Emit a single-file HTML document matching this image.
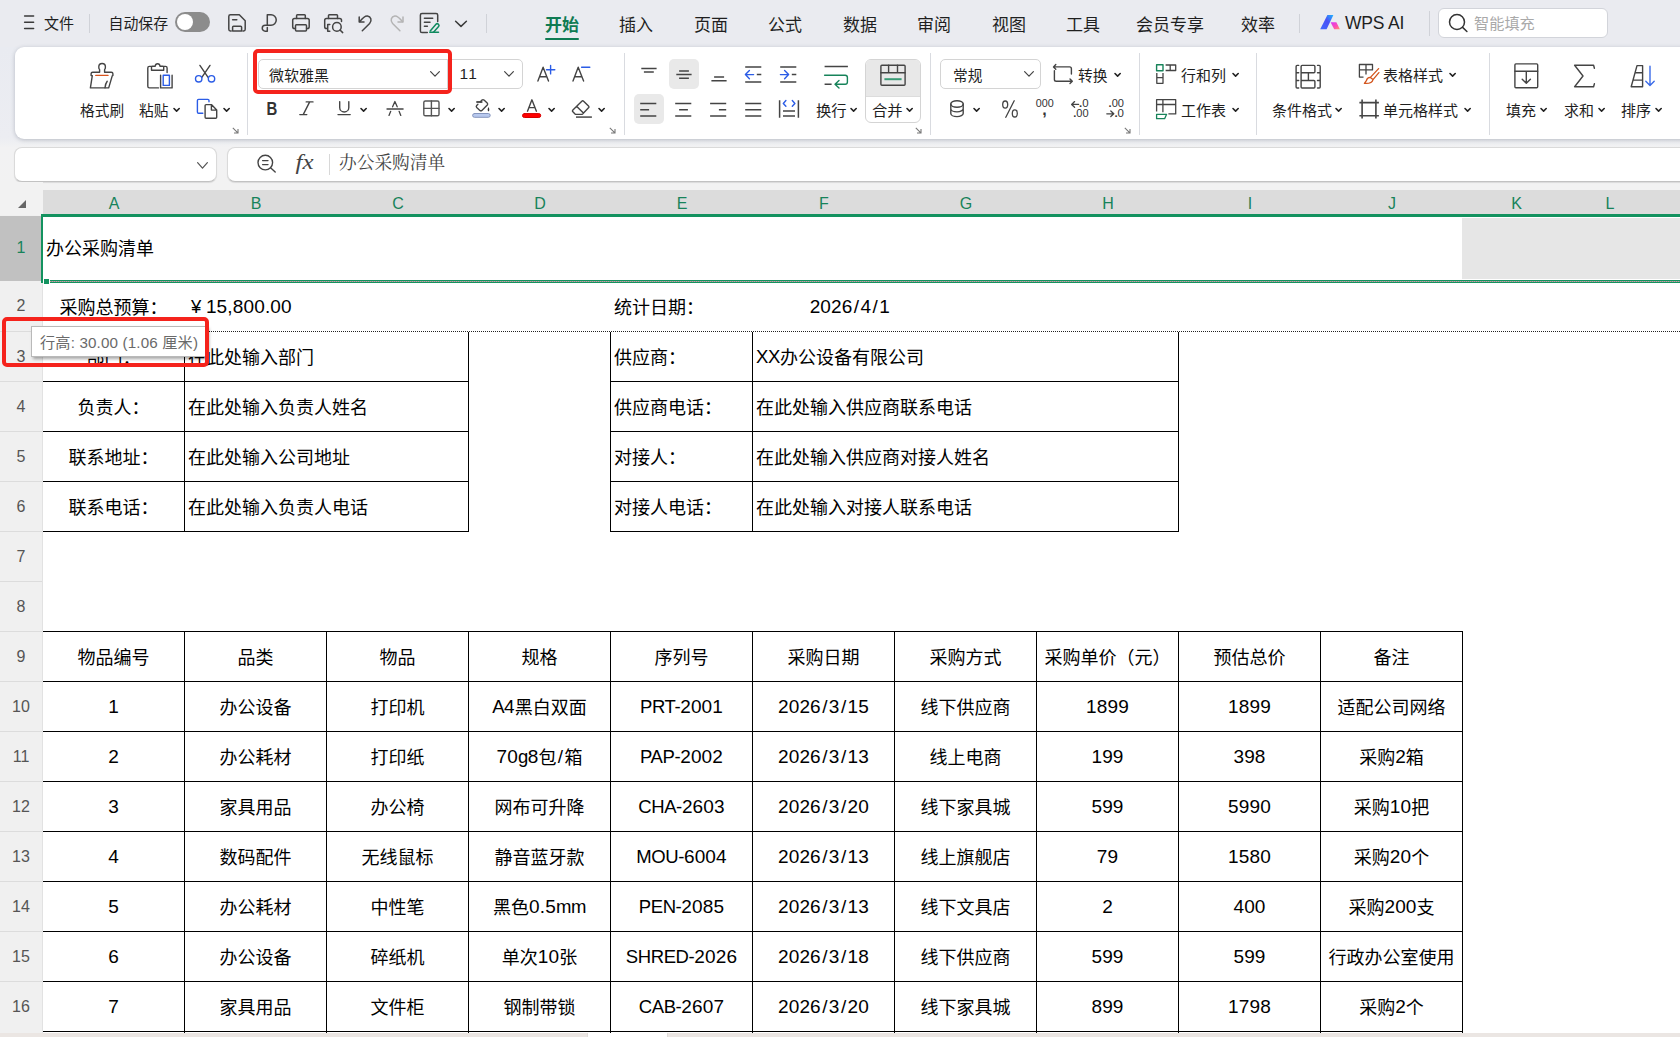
<!DOCTYPE html><html lang="zh-CN"><head><meta charset="utf-8"><title>办公采购清单</title><style>
*{box-sizing:border-box}
html,body{margin:0;padding:0}
body{width:1680px;height:1037px;overflow:hidden;position:relative;background:#fff;
 font-family:"Liberation Sans","Noto Sans CJK SC",sans-serif;color:#222}
.abs{position:absolute}
#top{position:absolute;left:0;top:0;width:1680px;height:47px;background:#eaebf0}
#mid{position:absolute;left:0;top:47px;width:1680px;height:143px;background:linear-gradient(#e9ebf1 0,#ecedf2 91px,#f2f2f3 101px,#f2f2f2 143px)}
#ribbon{position:absolute;left:15px;top:47px;width:1700px;height:92px;background:#fff;border-radius:9px;box-shadow:0 1px 4px rgba(60,70,90,.30)}
.t{position:absolute;white-space:nowrap;line-height:20px;height:20px;font-size:14.7px;color:#1f1f1f}
.tab{position:absolute;white-space:nowrap;top:14.5px;line-height:22px;font-size:17px;color:#1f1f1f}
.vs{position:absolute;width:1px;background:#d9dbe0}
.box{position:absolute;border:1px solid #d4d4d4;background:#fff}
.fb{box-shadow:0 1px 1px rgba(0,0,0,.10);border-bottom-color:#c2c2c2 !important}
svg{position:absolute;overflow:visible}
.chev{position:absolute;width:7px;height:5px}
/* sheet */
#sheet{position:absolute;left:0;top:190px;width:1680px;height:847px;background:#fff}
.colh{position:absolute;top:0;height:24px;line-height:27px;font-size:16px;color:#17835a;text-align:center}
.rowh{position:absolute;left:0;width:42px;text-align:center;font-size:16px;color:#555;border-top:1px solid #dcdcdc;}
.c{position:absolute;height:49px;line-height:49px;font-size:18px;color:#000;white-space:nowrap;overflow:hidden}
.c.ctr{text-align:center}
.c.l{text-align:left;padding-left:3px}
.c.r{text-align:right;padding-right:4px}
.c .d{font-size:19px;letter-spacing:.15px;position:relative;top:-1.5px}
.c .a{font-size:18.5px;letter-spacing:-.4px;position:relative;top:-1.5px}
.c .sl{margin:0 1.3px}
.hl{position:absolute;height:1px;background:#000}
.vl{position:absolute;width:1px;background:#000}
</style></head><body>
<div id="top"></div>
<div id="mid"></div>
<div id="ribbon"></div>
<div class="t" style="left:44px;top:14px;font-size:15px">文件</div>
<div class="vs" style="left:89px;top:14px;height:19px;background:#d0d2d8"></div>
<div class="t" style="left:108.5px;top:14px;font-size:14.9px">自动保存</div>
<div class="abs" style="left:175px;top:12px;width:35px;height:20px;border-radius:10px;background:#8c8c8c"><div class="abs" style="left:2px;top:2px;width:16px;height:16px;border-radius:8px;background:#fff"></div></div>
<div class="vs" style="left:486px;top:14px;height:19px;background:#d0d2d8"></div>
<div class="tab" style="left:545px;color:#0f7b53;font-weight:bold">开始</div>
<div class="abs" style="left:545px;top:38px;width:34px;height:2px;background:#0f7b53;border-radius:1px"></div>
<div class="tab" style="left:619px">插入</div>
<div class="tab" style="left:694px">页面</div>
<div class="tab" style="left:768px">公式</div>
<div class="tab" style="left:843px">数据</div>
<div class="tab" style="left:917px">审阅</div>
<div class="tab" style="left:992px">视图</div>
<div class="tab" style="left:1066px">工具</div>
<div class="tab" style="left:1136px">会员专享</div>
<div class="tab" style="left:1241px">效率</div>
<div class="vs" style="left:1299px;top:14px;height:19px;background:#d0d2d8"></div>
<div class="tab" style="left:1345px;top:12.3px;font-size:17.5px;letter-spacing:-.2px">WPS AI</div>
<div class="vs" style="left:1429px;top:11px;height:25px;background:#d0d2d8"></div>
<div class="box" style="left:1438px;top:8px;width:170px;height:30px;border-radius:6px;border-color:#d2d4da"></div>
<div class="t" style="left:1474px;top:14px;font-size:15.2px;color:#a9a9a9">智能填充</div>
<svg style="left:0;top:0;width:1680px;height:47px" viewBox="0 0 1680 47" fill="none" stroke="#444" stroke-width="1.5" stroke-linecap="round" stroke-linejoin="round">
<!-- hamburger -->
<path d="M24.6 16.1 H33.6 M24.6 22.3 H33.6 M24.6 28.6 H33.6" stroke="#3a3a3a"/>
<!-- save -->
<path d="M231.2 30.9 H230.4 Q228.8 30.9 228.8 29.3 V16.4 Q228.8 14.8 230.4 14.8 H239.3 L245.2 20.8 V29.3 Q245.2 30.9 243.6 30.9 H242.9"/>
<path d="M232.6 31 V27.2 Q232.6 26.3 233.5 26.3 H240.7 Q241.6 26.3 241.6 27.2 V31 Z"/>
<path d="M232.6 19.8 H236.8"/>
<!-- pdf P -->
<path d="M267.3 25.3 V14.8 H271 A5.25 5.25 0 0 1 271 25.3 H265.2 A2.95 2.95 0 0 0 265.2 31.2 H267.3 V27.4"/>
<!-- printer -->
<path d="M295.4 28.5 H294.5 Q292.7 28.5 292.7 26.7 V20.3 Q292.7 18.5 294.5 18.5 H307.4 Q309.2 18.5 309.2 20.3 V26.7 Q309.2 28.5 307.4 28.5 H306.6"/>
<path d="M296.6 18.5 V15.6 Q296.6 14.8 297.4 14.8 H304.5 Q305.3 14.8 305.3 15.6 V18.5"/>
<path d="M295.5 25.7 Q295.5 24.8 296.4 24.8 H305.6 Q306.5 24.8 306.5 25.7 V30.1 Q306.5 31 305.6 31 H296.4 Q295.5 31 295.5 30.1 Z"/>
<!-- print preview -->
<path d="M327 28.5 H326.4 Q324.7 28.5 324.7 26.7 V20.3 Q324.7 18.5 326.4 18.5 H339.8 Q341.5 18.5 341.5 20.3 V21.6"/>
<path d="M328.5 18.5 V15.6 Q328.5 14.8 329.3 14.8 H336.7 Q337.5 14.8 337.5 15.6 V18.5"/>
<path d="M329.8 24.6 H327.7 V31.2 H329.8"/>
<circle cx="336.9" cy="26.9" r="4.3"/>
<path d="M340 30 L342.7 32.6"/>
<!-- undo -->
<path d="M359.2 17 V22 H364"/>
<path d="M359.8 21.4 C362.6 18 364.8 15.7 367.4 16 C370.8 16.5 372.4 20.4 369.6 23.5 L362.3 30.8"/>
<!-- redo -->
<g stroke="#b4b4b4"><path d="M403 16.9 V22 H398"/>
<path d="M402.4 21.4 C399.6 18 397.4 15.7 394.8 16 C391.4 16.5 389.8 20.4 392.6 23.5 L399.9 30.8"/></g>
<!-- doc edit -->
<path d="M427.3 32.5 H422 Q420.4 32.5 420.4 30.9 V15.1 Q420.4 13.5 422 13.5 H436.1 Q437.7 13.5 437.7 15.1 V21.5"/>
<path d="M424.4 18.3 H432.7 M424.4 22.3 H430 M424.4 26.2 H427.4"/>
<g stroke="#0f8a5f"><path d="M429.8 32.3 H438.5"/><path d="M430.2 31 L436.2 24.1 Q437.2 23.2 438.2 24.1 L438.6 24.5 Q439.5 25.5 438.6 26.5 L433.5 32.2"/></g>
<!-- chevron -->
<path d="M455.6 21.2 L461 26.4 L466.4 21.2" stroke="#3a3a3a"/>
<!-- WPS AI logo -->
<defs><linearGradient id="gb" x1="0" y1="1" x2="1" y2="0"><stop offset="0" stop-color="#3f6bff"/><stop offset=".55" stop-color="#4a50f5"/><stop offset="1" stop-color="#1fb6ff"/></linearGradient>
<linearGradient id="gp" x1="0" y1="0" x2="1" y2="1"><stop offset="0" stop-color="#d633ff"/><stop offset=".6" stop-color="#ff4fb0"/><stop offset="1" stop-color="#ff9a6a"/></linearGradient></defs>
<path d="M1320.2 29.2 L1327.4 14.9 H1333.4 L1326.6 29.2 Z" fill="url(#gb)" stroke="none"/>
<path d="M1330.6 22.2 H1336.4 L1339.9 29.2 H1334.2 Z" fill="url(#gp)" stroke="none"/>
<!-- search -->
<circle cx="1457" cy="22" r="7.5" stroke="#333"/><path d="M1462.6 27.4 L1466.9 31.5" stroke="#333"/>
</svg>

<div class="t" style="left:80px;top:100.6px;">格式刷</div>
<div class="t" style="left:139px;top:100.6px;">粘贴</div>
<svg class="chev" style="left:173px;top:107px" viewBox="0 0 7 5"><path d="M1 1.5 L3.6 4.1 L6.2 1.5" fill="none" stroke="#222" stroke-width="1.6" stroke-linecap="round" stroke-linejoin="round"/></svg>
<svg class="chev" style="left:223px;top:107px" viewBox="0 0 7 5"><path d="M1 1.5 L3.6 4.1 L6.2 1.5" fill="none" stroke="#222" stroke-width="1.6" stroke-linecap="round" stroke-linejoin="round"/></svg>
<svg style="left:232px;top:127px;width:7px;height:7px" viewBox="0 0 7 7"><path d="M0.8 0.8 L5.6 5.6 M6 2 V6 H2" fill="none" stroke="#777" stroke-width="1.1"/></svg>
<div class="vs" style="left:247px;top:53px;height:82px"></div>
<div class="box" style="left:258px;top:59px;width:265px;height:30px;border-radius:5px"></div>
<div class="vs" style="left:447px;top:60px;height:28px;background:#d4d4d4"></div>
<div class="t" style="left:269px;top:65.6px;font-size:15px">微软雅黑</div>
<svg style="left:430px;top:71px;width:10px;height:6px" viewBox="0 0 10 6"><path d="M0.6 0.6 L5.0 5.2 L9.4 0.6" fill="none" stroke="#444" stroke-width="1.2" stroke-linecap="round" stroke-linejoin="round"/></svg>
<div class="t" style="left:459.5px;top:64.2px;font-size:15.5px;letter-spacing:1.2px">11</div>
<svg style="left:504px;top:71px;width:10px;height:6px" viewBox="0 0 10 6"><path d="M0.6 0.6 L5.0 5.2 L9.4 0.6" fill="none" stroke="#444" stroke-width="1.2" stroke-linecap="round" stroke-linejoin="round"/></svg>
<div class="abs" style="left:253px;top:49px;width:199px;height:45px;border:4px solid #f5231c;border-radius:5px"></div>
<svg class="chev" style="left:360px;top:107px" viewBox="0 0 7 5"><path d="M1 1.5 L3.6 4.1 L6.2 1.5" fill="none" stroke="#222" stroke-width="1.6" stroke-linecap="round" stroke-linejoin="round"/></svg>
<svg class="chev" style="left:448px;top:107px" viewBox="0 0 7 5"><path d="M1 1.5 L3.6 4.1 L6.2 1.5" fill="none" stroke="#222" stroke-width="1.6" stroke-linecap="round" stroke-linejoin="round"/></svg>
<svg class="chev" style="left:498px;top:107px" viewBox="0 0 7 5"><path d="M1 1.5 L3.6 4.1 L6.2 1.5" fill="none" stroke="#222" stroke-width="1.6" stroke-linecap="round" stroke-linejoin="round"/></svg>
<svg class="chev" style="left:548px;top:107px" viewBox="0 0 7 5"><path d="M1 1.5 L3.6 4.1 L6.2 1.5" fill="none" stroke="#222" stroke-width="1.6" stroke-linecap="round" stroke-linejoin="round"/></svg>
<svg class="chev" style="left:598px;top:107px" viewBox="0 0 7 5"><path d="M1 1.5 L3.6 4.1 L6.2 1.5" fill="none" stroke="#222" stroke-width="1.6" stroke-linecap="round" stroke-linejoin="round"/></svg>
<svg style="left:609px;top:127px;width:7px;height:7px" viewBox="0 0 7 7"><path d="M0.8 0.8 L5.6 5.6 M6 2 V6 H2" fill="none" stroke="#777" stroke-width="1.1"/></svg>
<div class="vs" style="left:624px;top:53px;height:82px"></div>
<div class="abs" style="left:669px;top:59px;width:30px;height:30px;border-radius:5px;background:#e9e9e9"></div>
<div class="abs" style="left:634px;top:94px;width:30px;height:30px;border-radius:5px;background:#e9e9e9"></div>
<div class="t" style="left:816px;top:100.6px;font-size:15.3px">换行</div>
<svg class="chev" style="left:850px;top:107px" viewBox="0 0 7 5"><path d="M1 1.5 L3.6 4.1 L6.2 1.5" fill="none" stroke="#222" stroke-width="1.6" stroke-linecap="round" stroke-linejoin="round"/></svg>
<div class="box" style="left:865px;top:59px;width:56px;height:64px;border-radius:6px;overflow:hidden"><div style="height:37px;background:#e8e8e8;border-bottom:1px solid #dcdcdc"></div></div>
<div class="t" style="left:872px;top:100.6px;font-size:15.3px">合并</div>
<svg class="chev" style="left:906px;top:107px" viewBox="0 0 7 5"><path d="M1 1.5 L3.6 4.1 L6.2 1.5" fill="none" stroke="#222" stroke-width="1.6" stroke-linecap="round" stroke-linejoin="round"/></svg>
<svg style="left:915px;top:127px;width:7px;height:7px" viewBox="0 0 7 7"><path d="M0.8 0.8 L5.6 5.6 M6 2 V6 H2" fill="none" stroke="#777" stroke-width="1.1"/></svg>
<div class="vs" style="left:930px;top:53px;height:82px"></div>
<div class="box" style="left:940px;top:59px;width:101px;height:30px;border-radius:5px"></div>
<div class="t" style="left:953px;top:65.6px;">常规</div>
<svg style="left:1024px;top:71px;width:10px;height:6px" viewBox="0 0 10 6"><path d="M0.6 0.6 L5.0 5.2 L9.4 0.6" fill="none" stroke="#444" stroke-width="1.2" stroke-linecap="round" stroke-linejoin="round"/></svg>
<div class="t" style="left:1078px;top:65.6px;">转换</div>
<svg class="chev" style="left:1114px;top:72px" viewBox="0 0 7 5"><path d="M1 1.5 L3.6 4.1 L6.2 1.5" fill="none" stroke="#222" stroke-width="1.6" stroke-linecap="round" stroke-linejoin="round"/></svg>
<svg class="chev" style="left:973px;top:107px" viewBox="0 0 7 5"><path d="M1 1.5 L3.6 4.1 L6.2 1.5" fill="none" stroke="#222" stroke-width="1.6" stroke-linecap="round" stroke-linejoin="round"/></svg>
<svg style="left:1124px;top:127px;width:7px;height:7px" viewBox="0 0 7 7"><path d="M0.8 0.8 L5.6 5.6 M6 2 V6 H2" fill="none" stroke="#777" stroke-width="1.1"/></svg>
<div class="vs" style="left:1139px;top:53px;height:82px"></div>
<div class="t" style="left:1181px;top:65.6px;font-size:15px">行和列</div>
<svg class="chev" style="left:1232px;top:72px" viewBox="0 0 7 5"><path d="M1 1.5 L3.6 4.1 L6.2 1.5" fill="none" stroke="#222" stroke-width="1.6" stroke-linecap="round" stroke-linejoin="round"/></svg>
<div class="t" style="left:1181px;top:100.6px;font-size:15px">工作表</div>
<svg class="chev" style="left:1232px;top:107px" viewBox="0 0 7 5"><path d="M1 1.5 L3.6 4.1 L6.2 1.5" fill="none" stroke="#222" stroke-width="1.6" stroke-linecap="round" stroke-linejoin="round"/></svg>
<div class="vs" style="left:1256px;top:53px;height:82px"></div>
<div class="t" style="left:1272px;top:100.6px;font-size:15px">条件格式</div>
<svg class="chev" style="left:1335px;top:107px" viewBox="0 0 7 5"><path d="M1 1.5 L3.6 4.1 L6.2 1.5" fill="none" stroke="#222" stroke-width="1.6" stroke-linecap="round" stroke-linejoin="round"/></svg>
<div class="t" style="left:1383px;top:65.6px;font-size:15px">表格样式</div>
<svg class="chev" style="left:1449px;top:72px" viewBox="0 0 7 5"><path d="M1 1.5 L3.6 4.1 L6.2 1.5" fill="none" stroke="#222" stroke-width="1.6" stroke-linecap="round" stroke-linejoin="round"/></svg>
<div class="t" style="left:1383px;top:100.6px;font-size:15px">单元格样式</div>
<svg class="chev" style="left:1464px;top:107px" viewBox="0 0 7 5"><path d="M1 1.5 L3.6 4.1 L6.2 1.5" fill="none" stroke="#222" stroke-width="1.6" stroke-linecap="round" stroke-linejoin="round"/></svg>
<div class="vs" style="left:1489px;top:53px;height:82px"></div>
<div class="t" style="left:1506px;top:100.6px;font-size:15px">填充</div>
<svg class="chev" style="left:1540px;top:107px" viewBox="0 0 7 5"><path d="M1 1.5 L3.6 4.1 L6.2 1.5" fill="none" stroke="#222" stroke-width="1.6" stroke-linecap="round" stroke-linejoin="round"/></svg>
<div class="t" style="left:1564px;top:100.6px;font-size:15px">求和</div>
<svg class="chev" style="left:1598px;top:107px" viewBox="0 0 7 5"><path d="M1 1.5 L3.6 4.1 L6.2 1.5" fill="none" stroke="#222" stroke-width="1.6" stroke-linecap="round" stroke-linejoin="round"/></svg>
<div class="t" style="left:1621px;top:100.6px;font-size:15px">排序</div>
<svg class="chev" style="left:1655px;top:107px" viewBox="0 0 7 5"><path d="M1 1.5 L3.6 4.1 L6.2 1.5" fill="none" stroke="#222" stroke-width="1.6" stroke-linecap="round" stroke-linejoin="round"/></svg>
<svg style="left:0;top:0;width:1680px;height:190px" viewBox="0 0 1680 190" fill="none" stroke="#444" stroke-width="1.4" stroke-linecap="round" stroke-linejoin="round">
<!-- format painter -->
<path d="M99.6 72.2 V69.6 Q98.6 68.4 98.8 66.8 A3.3 3.3 0 0 1 105.4 66.8 Q105.6 68.4 104.6 69.6 V72.2 H111.3 Q112.9 72.2 112.9 73.8 V75.6 H112.3 L108.7 87.9 H90.4 L92.3 75.6 H91.1 V73.8 Q91.1 72.2 92.7 72.2 Z"/>
<path d="M107.2 81.2 Q105.4 83.5 105 87.7"/>
<path d="M95.8 75.4 H108" stroke="#d9541e"/>
<!-- paste -->
<path d="M158.5 87.9 H149.4 Q147.8 87.9 147.8 86.3 V68 Q147.8 66.4 149.4 66.4 H151.4 M163.8 66.4 H165.5 Q167.1 66.4 167.1 68 V72.6"/>
<path d="M151.5 70.2 V67 Q151.5 66.2 152.3 66.2 H155.2 Q155.4 63.8 157.6 63.8 Q159.8 63.8 160 66.2 H162.9 Q163.7 66.2 163.7 67 V70.2 Z"/>
<path d="M160.6 75.2 V87.9 H172.1 V75.2"/>
<rect x="163.2" y="75.2" width="6.2" height="10.2" stroke="#2b5ce6"/>
<!-- scissors -->
<path d="M199.9 65.4 L207.9 77.2 M210 65.4 L202 77.2"/>
<circle cx="198.7" cy="78.8" r="3.2" stroke="#2b5ce6"/><circle cx="211.5" cy="78.8" r="3.2" stroke="#2b5ce6"/>
<!-- copy -->
<path d="M202.8 113.3 H198.6 Q197.4 113.3 197.4 112.1 V100.6 Q197.4 99.4 198.6 99.4 H207.8 Q209 99.4 209 100.6 V101.8" stroke="#2b5ce6"/>
<path d="M205.1 105.6 Q205.1 104.6 206.1 104.6 H211.4 L216.7 110.1 V117.2 Q216.7 118.2 215.7 118.2 H206.1 Q205.1 118.2 205.1 117.2 Z M211.4 104.8 V110.1 H216.5"/>
<!-- I -->
<path d="M306.2 101.9 H313 M299.8 114.6 H306.8 M309.7 101.9 L303.2 114.6" stroke-width="1.4"/>
<!-- U -->
<path d="M339.7 101.6 V107.4 A4.55 4.55 0 0 0 348.8 107.4 V101.6 M338 114.6 H350.2" stroke-width="1.4"/>
<!-- strike A -->
<path d="M392.6 106.8 L394.9 101.5 L397.2 106.8 M390.7 111.3 L389 115.4 M399.1 111.3 L400.8 115.4 M387 109 H403.1" stroke-width="1.3"/>
<!-- border -->
<rect x="423.8" y="101" width="15.2" height="14.8" rx="1.6" stroke="#555"/><path d="M431.4 101 V115.8 M423.8 108.4 H439" stroke="#555"/>
<!-- fill bucket -->
<path d="M480.4 101.8 L482 100.1 Q483 99.2 484 100.1 L487.2 103.1 Q488.1 104 487.3 105 L481.9 110.4 Q480.9 111.3 479.9 110.4 L476.7 107.4 Q475.8 106.5 476.7 105.5 L477.9 104.3" stroke-width="1.4"/>
<path d="M476.3 102 H482.4" stroke-width="1.8" stroke-linecap="butt"/>
<path d="M488.5 107 Q490.2 110.4 488.5 111.4 Q486.8 110.4 488.5 107 Z" fill="#333" stroke="none"/>
<rect x="472.6" y="113.5" width="17.6" height="3.8" rx="1.9" fill="#b8c9ee" stroke="#8595bd" stroke-width="1"/>
<!-- font color -->
<path d="M527.5 111.2 L531.9 99.8 L536.4 111.2 M529 107.6 H534.8" stroke-width="1.4"/>
<rect x="522.5" y="113.6" width="18.2" height="3.9" rx="1.9" fill="#ff0000" stroke="#d60000" stroke-width="1"/>
<!-- eraser -->
<path d="M581.8 101.2 Q582.7 100.3 583.6 101.2 L588.5 106 Q589.4 106.9 588.5 107.8 L582.6 113.9 Q582.1 114.4 581.4 114.4 H576.2 Q575.5 114.4 575 113.9 L572.9 111.8 Q572 110.9 572.9 110 Z M576.8 106.4 L583.4 113.1" stroke-width="1.4"/>
<path d="M576 117.1 H591.9" stroke="#666" stroke-width="1.8" stroke-linecap="butt"/>
<!-- A+ A- -->
<path d="M537.9 81 L543.1 67.2 L548.5 81 M539.6 76.7 H546.8 M573 81 L578.2 67.2 L583.6 81 M574.7 76.7 H581.9" stroke-width="1.4"/>
<path d="M546.5 69.7 H554.8 M550.6 65.5 V73.9 M581.6 67.3 H589.8" stroke="#2b5ce6" stroke-width="1.4"/>
<!-- align row1 -->
<g stroke-width="1.5" stroke-linecap="butt">
<path d="M641.3 68.4 H656.6 M643.9 72.1 H653.8"/>
<path d="M679.1 70.9 H688.9 M676.3 74.6 H691.6 M679.1 78.3 H688.9"/>
<path d="M714.1 77 H724.1 M711.4 80.7 H726.6"/>
<path d="M745.2 67 H761.3 M745.2 82.1 H761.3 M756.8 74.6 H761.3"/>
<path d="M780.2 67 H796.3 M780.2 82.1 H796.3 M791.8 74.6 H796.3"/>
<path d="M640.2 103.4 H656.3 M640.2 109.7 H649.1 M640.2 116 H656.3"/>
<path d="M675.2 103.4 H691.3 M679.1 109.7 H687.9 M675.2 116 H691.3"/>
<path d="M710.1 103.4 H726.2 M718.9 109.7 H726.2 M710.1 116 H726.2"/>
<path d="M745.2 103.4 H761.3 M745.2 109.7 H761.3 M745.2 116 H761.3"/>
<path d="M779.6 100.2 V117.7 M798.4 100.2 V117.7 M783 110.9 H795 M783 116 H795"/>
</g>
<g stroke="#2b5ce6" stroke-width="1.4">
<path d="M753.6 74.6 H745.6 M749.4 70.5 L745.4 74.6 L749.4 78.7"/>
<path d="M780.4 74.6 H788.4 M784.6 70.5 L788.6 74.6 L784.6 78.7"/>
<path d="M785.9 100.6 L783.3 103.4 L785.9 106.2 M792.3 100.6 L794.9 103.4 L792.3 106.2"/>
</g>
<!-- wrap -->
<path d="M824.6 66.5 H847.9 M824.6 84.2 H831.6" stroke-linecap="butt"/>
<path d="M824.6 75.2 H845.2 Q847.4 75.2 847.4 77.4 V82 Q847.4 84.2 845.2 84.2 H835.4 M839 80.4 L835 84.2 L839 88" stroke="#17835a"/>
<!-- merge -->
<rect x="880.9" y="65.3" width="24.2" height="20" rx="1"/><path d="M880.9 72.7 H905.1 M888.6 65.3 V72.7 M897.5 65.3 V72.7"/>
<path d="M884.4 79.2 H901.6" stroke="#3a9b76" stroke-width="2" stroke-linecap="butt"/>
<!-- convert -->
<path d="M1055.8 64.6 L1053.5 66.9 L1055.8 69.2 M1053.6 66.9 H1069.6 Q1071.4 66.9 1071.4 68.7 V74 M1070 79 L1072.3 81.3 L1070 83.6 M1072.2 81.3 H1056.2 Q1054.4 81.3 1054.4 79.5 V70.6" stroke-width="1.4"/>
<!-- coins -->
<ellipse cx="957" cy="104" rx="6.2" ry="3.2" stroke-width="1.4"/>
<path d="M950.8 104 V113.4 A6.2 3.2 0 0 0 963.2 113.4 V104 M950.8 108.7 A6.2 3.2 0 0 0 963.2 108.7" stroke-width="1.4"/>
<!-- percent -->
<ellipse cx="1005.2" cy="104.6" rx="2.5" ry="3.6" stroke-width="1.3"/><ellipse cx="1014.8" cy="113.4" rx="2.5" ry="3.6" stroke-width="1.3"/><path d="M1014.2 100.8 L1005.8 117.3" stroke-width="1.3"/>
<!-- arrows for decimals -->
<path d="M1078.6 104.4 H1071.8 M1074.6 101.6 L1071.6 104.4 L1074.6 107.2 M1106.8 113.8 H1113.6 M1110.8 111 L1113.8 113.8 L1110.8 116.6" stroke-width="1.3"/>
<!-- rows and cols -->
<rect x="1156.6" y="64.8" width="6.4" height="6" stroke="#17835a" stroke-width="1.4"/>
<path d="M1165.6 65 H1175.7 V70.5 H1165.6 M1170.2 65 V70.5 M1156.8 73 V83.3 H1163 V73 M1156.8 77.7 H1163" stroke-width="1.3" stroke-linecap="butt"/>
<!-- worksheet -->
<path d="M1156.6 111.6 V99.7 H1175.7 V113.9 H1168.4 M1156.6 104.5 H1175.7 M1162.9 99.7 V112.2" stroke-width="1.3" stroke-linecap="butt"/>
<path d="M1156.6 114.3 H1166.6 L1164.6 118.7 H1156.6 Z" stroke="#17835a" stroke-width="1.3"/>
<!-- conditional format -->
<path d="M1298.7 65.4 H1297.1 Q1296.1 65.4 1296.1 66.4 V87 Q1296.1 88 1297.1 88 H1298.7 M1296.1 72.7 H1298.7 M1296.1 80.5 H1298.7 M1317.5 65.4 H1319.2 Q1320.2 65.4 1320.2 66.4 V87 Q1320.2 88 1319.2 88 H1317.5 M1320.2 72.7 H1317.5 M1320.2 80.5 H1317.5" stroke-width="1.4"/>
<path d="M1301.1 72.7 H1313.9 Q1314.9 72.7 1314.9 71.7 V66.4 Q1314.9 65.4 1313.9 65.4 H1302.1 Q1301.1 65.4 1301.1 66.4 V87 Q1301.1 88 1302.1 88 H1313.9 Q1314.9 88 1314.9 87 V81.5 Q1314.9 80.5 1313.9 80.5 H1301.1 M1308.4 72.7 V80.5" stroke-width="1.4"/>
<!-- table style -->
<path d="M1363.5 77.1 H1359.4 V64.5 H1372.5 V69.9 H1359.4 M1366 64.5 V74.4" stroke-width="1.3" stroke-linecap="butt"/>
<path d="M1378.6 68.6 L1370.4 77.4 M1378.9 72.6 L1373 79.6 M1370.4 77.4 Q1367.2 77.2 1366.4 80.6 L1364.4 83.4 Q1372 84 1373 79.6 Z" stroke="#d2541c" stroke-width="1.3"/>
<!-- cell style -->
<path d="M1362.1 99.4 V118.6 M1375.9 99.4 V118.6 M1359.4 102.6 H1378.9 M1359.4 115.7 H1378.9" stroke-width="1.6" stroke-linecap="butt"/>
<!-- fill -->
<rect x="1514.9" y="63.9" width="22.8" height="23.8" rx="1"/><path d="M1514.9 71.3 H1537.7 M1526.3 71.3 V83 M1522.2 79.2 L1526.3 83.3 L1530.4 79.2" stroke-width="1.4"/>
<!-- sum -->
<path d="M1594.4 68.3 L1593.6 65.3 H1574.6 L1583 76 L1574.6 86.7 H1593.6 L1594.4 83.7" stroke-width="1.4"/>
<!-- sort -->
<path d="M1637 65.6 H1642.6 V86.7 H1631.2 Z M1635 72.8 H1642.6 M1633.1 80.1 H1642.6" stroke-width="1.4"/>
<path d="M1650 66.2 V85.2 M1645.8 81.2 L1650 85.4 L1654.2 81.2" stroke="#3b6be8" stroke-width="1.4"/>
<!-- glyph icons as text -->
<g stroke="none" fill="#333" font-family="Liberation Sans, sans-serif">
<text x="266.4" y="115" font-size="18.5" font-weight="bold" textLength="10.8" lengthAdjust="spacingAndGlyphs">B</text>
<text x="1035.8" y="107.3" font-size="10.2" textLength="18" lengthAdjust="spacingAndGlyphs">000</text>
<text x="1042.2" y="114.8" font-size="16" font-weight="bold">,</text>
<text x="1079" y="107.4" font-size="10.2" font-weight="bold" textLength="9.6" lengthAdjust="spacingAndGlyphs">.<tspan font-weight="normal">0</tspan></text>
<text x="1073.2" y="117.4" font-size="10.2" font-weight="bold" textLength="15.4" lengthAdjust="spacingAndGlyphs">.<tspan font-weight="normal">00</tspan></text>
<text x="1108.6" y="107.4" font-size="10.2" font-weight="bold" textLength="15.4" lengthAdjust="spacingAndGlyphs">.<tspan font-weight="normal">00</tspan></text>
<text x="1114.4" y="117.4" font-size="10.2" font-weight="bold" textLength="9.6" lengthAdjust="spacingAndGlyphs">.<tspan font-weight="normal">0</tspan></text>
</g>
</svg>

<div class="box fb" style="left:14px;top:147px;width:203px;height:35px;border-radius:8px;border-color:#dadada"></div>
<svg style="left:197px;top:162px;width:11px;height:7px" viewBox="0 0 11 7"><path d="M0.6 0.6 L5.5 6.2 L10.4 0.6" fill="none" stroke="#555" stroke-width="1.2" stroke-linecap="round" stroke-linejoin="round"/></svg>
<div class="box fb" style="left:227px;top:147px;width:1500px;height:35px;border-radius:8px;border-color:#dadada"></div>
<div class="vs" style="left:329px;top:154px;height:21px;background:#d8d8d8"></div>
<div class="abs" style="left:339px;top:152px;height:22px;line-height:22px;font-size:17.7px;color:#444;white-space:nowrap;font-family:'Liberation Serif','Noto Serif CJK SC',serif">办公采购清单</div>
<svg style="left:0;top:140px;width:460px;height:50px" viewBox="0 140 460 50" fill="none" stroke="#444" stroke-width="1.4" stroke-linecap="round" stroke-linejoin="round">
<circle cx="265.3" cy="162.6" r="7.3"/><path d="M262.6 160.6 H268 M262.6 164.6 H268 M270.8 168 L275.2 172"/>
<text x="295.5" y="169.2" font-family="Liberation Serif, serif" font-style="italic" font-size="21" fill="#444" stroke="none" textLength="18" lengthAdjust="spacingAndGlyphs">fx</text>
</svg>

<div id="sheet">
<div class="abs" style="left:43px;top:0;width:1637px;height:24px;background:#dcdcdc"></div>
<div class="abs" style="left:0;top:-8px;width:43px;height:33px;background:#f2f2f2"></div>
<div class="colh" style="left:43px;width:142px">A</div>
<div class="colh" style="left:185px;width:142px">B</div>
<div class="colh" style="left:327px;width:142px">C</div>
<div class="colh" style="left:469px;width:142px">D</div>
<div class="colh" style="left:611px;width:142px">E</div>
<div class="colh" style="left:753px;width:142px">F</div>
<div class="colh" style="left:895px;width:142px">G</div>
<div class="colh" style="left:1037px;width:142px">H</div>
<div class="colh" style="left:1179px;width:142px">I</div>
<div class="colh" style="left:1321px;width:142px">J</div>
<div class="colh" style="left:1463px;width:107px">K</div>
<div class="colh" style="left:1570px;width:80px">L</div>
<svg style="left:18px;top:10px;width:8px;height:8px" viewBox="0 0 8 8"><path d="M8 0 V8 H0 Z" fill="#666"/></svg>
<div class="abs" style="left:0;top:25px;width:43px;height:822px;background:#f0f0f0;border-right:1px solid #e2e2e2"></div>
<div class="abs" style="left:0;top:26px;width:42px;height:65px;background:#c1c1c1"></div>
<div class="rowh" style="top:24px;height:67px;line-height:67px;color:#17835a;border-top:0;">1</div>
<div class="rowh" style="top:91px;height:50px;line-height:50px;color:#555;border-top:0;">2</div>
<div class="rowh" style="top:141px;height:50px;line-height:50px;color:#555;">3</div>
<div class="rowh" style="top:191px;height:50px;line-height:50px;color:#555;">4</div>
<div class="rowh" style="top:241px;height:50px;line-height:50px;color:#555;">5</div>
<div class="rowh" style="top:291px;height:50px;line-height:50px;color:#555;">6</div>
<div class="rowh" style="top:341px;height:50px;line-height:50px;color:#555;">7</div>
<div class="rowh" style="top:391px;height:50px;line-height:50px;color:#555;">8</div>
<div class="rowh" style="top:441px;height:50px;line-height:50px;color:#555;">9</div>
<div class="rowh" style="top:491px;height:50px;line-height:50px;color:#555;">10</div>
<div class="rowh" style="top:541px;height:50px;line-height:50px;color:#555;">11</div>
<div class="rowh" style="top:591px;height:50px;line-height:50px;color:#555;">12</div>
<div class="rowh" style="top:641px;height:50px;line-height:50px;color:#555;">13</div>
<div class="rowh" style="top:691px;height:50px;line-height:50px;color:#555;">14</div>
<div class="rowh" style="top:741px;height:50px;line-height:50px;color:#555;">15</div>
<div class="rowh" style="top:791px;height:50px;line-height:50px;color:#555;">16</div>
<div class="abs" style="left:1462px;top:28px;width:218px;height:61px;background:#e6e6e6"></div>
<div class="c l" style="left:43px;top:25px;width:567px;height:66px;line-height:69px;">办公采购清单</div>
<div class="c ctr" style="left:43px;top:92px;width:141px;height:49px;line-height:52px;">采购总预算：</div>
<div class="c l" style="left:185px;top:92px;width:141px;height:49px;line-height:52px;padding-left:6px"><span class="a">¥</span> <span class="d">15,800.00</span></div>
<div class="c l" style="left:611px;top:92px;width:141px;height:49px;line-height:52px;">统计日期：</div>
<div class="c r" style="left:753px;top:92px;width:141px;height:49px;line-height:52px;"><span class="d">2026<span class="sl">/</span>4<span class="sl">/</span>1</span></div>
<div class="c ctr" style="left:43px;top:142px;width:141px;height:49px;line-height:52px;">部门：</div>
<div class="c l" style="left:185px;top:142px;width:283px;height:49px;line-height:52px;">在此处输入部门</div>
<div class="c l" style="left:611px;top:142px;width:141px;height:49px;line-height:52px;">供应商：</div>
<div class="c l" style="left:753px;top:142px;width:425px;height:49px;line-height:52px;"><span class="a">XX</span>办公设备有限公司</div>
<div class="c ctr" style="left:43px;top:192px;width:141px;height:49px;line-height:52px;">负责人：</div>
<div class="c l" style="left:185px;top:192px;width:283px;height:49px;line-height:52px;">在此处输入负责人姓名</div>
<div class="c l" style="left:611px;top:192px;width:141px;height:49px;line-height:52px;">供应商电话：</div>
<div class="c l" style="left:753px;top:192px;width:425px;height:49px;line-height:52px;">在此处输入供应商联系电话</div>
<div class="c ctr" style="left:43px;top:242px;width:141px;height:49px;line-height:52px;">联系地址：</div>
<div class="c l" style="left:185px;top:242px;width:283px;height:49px;line-height:52px;">在此处输入公司地址</div>
<div class="c l" style="left:611px;top:242px;width:141px;height:49px;line-height:52px;">对接人：</div>
<div class="c l" style="left:753px;top:242px;width:425px;height:49px;line-height:52px;">在此处输入供应商对接人姓名</div>
<div class="c ctr" style="left:43px;top:292px;width:141px;height:49px;line-height:52px;">联系电话：</div>
<div class="c l" style="left:185px;top:292px;width:283px;height:49px;line-height:52px;">在此处输入负责人电话</div>
<div class="c l" style="left:611px;top:292px;width:141px;height:49px;line-height:52px;">对接人电话：</div>
<div class="c l" style="left:753px;top:292px;width:425px;height:49px;line-height:52px;">在此处输入对接人联系电话</div>
<div class="c ctr" style="left:43px;top:442px;width:141px;height:49px;line-height:52px;">物品编号</div>
<div class="c ctr" style="left:185px;top:442px;width:141px;height:49px;line-height:52px;">品类</div>
<div class="c ctr" style="left:327px;top:442px;width:141px;height:49px;line-height:52px;">物品</div>
<div class="c ctr" style="left:469px;top:442px;width:141px;height:49px;line-height:52px;">规格</div>
<div class="c ctr" style="left:611px;top:442px;width:141px;height:49px;line-height:52px;">序列号</div>
<div class="c ctr" style="left:753px;top:442px;width:141px;height:49px;line-height:52px;">采购日期</div>
<div class="c ctr" style="left:895px;top:442px;width:141px;height:49px;line-height:52px;">采购方式</div>
<div class="c ctr" style="left:1037px;top:442px;width:141px;height:49px;line-height:52px;">采购单价（元）</div>
<div class="c ctr" style="left:1179px;top:442px;width:141px;height:49px;line-height:52px;">预估总价</div>
<div class="c ctr" style="left:1321px;top:442px;width:141px;height:49px;line-height:52px;">备注</div>
<div class="c ctr" style="left:43px;top:492px;width:141px;height:49px;line-height:52px;"><span class="d">1</span></div>
<div class="c ctr" style="left:185px;top:492px;width:141px;height:49px;line-height:52px;">办公设备</div>
<div class="c ctr" style="left:327px;top:492px;width:141px;height:49px;line-height:52px;">打印机</div>
<div class="c ctr" style="left:469px;top:492px;width:141px;height:49px;line-height:52px;"><span class="a">A</span><span class="d">4</span>黑白双面</div>
<div class="c ctr" style="left:611px;top:492px;width:141px;height:49px;line-height:52px;"><span class="a">PRT-</span><span class="d">2001</span></div>
<div class="c ctr" style="left:753px;top:492px;width:141px;height:49px;line-height:52px;"><span class="d">2026<span class="sl">/</span>3<span class="sl">/</span>15</span></div>
<div class="c ctr" style="left:895px;top:492px;width:141px;height:49px;line-height:52px;">线下供应商</div>
<div class="c ctr" style="left:1037px;top:492px;width:141px;height:49px;line-height:52px;"><span class="d">1899</span></div>
<div class="c ctr" style="left:1179px;top:492px;width:141px;height:49px;line-height:52px;"><span class="d">1899</span></div>
<div class="c ctr" style="left:1321px;top:492px;width:141px;height:49px;line-height:52px;">适配公司网络</div>
<div class="c ctr" style="left:43px;top:542px;width:141px;height:49px;line-height:52px;"><span class="d">2</span></div>
<div class="c ctr" style="left:185px;top:542px;width:141px;height:49px;line-height:52px;">办公耗材</div>
<div class="c ctr" style="left:327px;top:542px;width:141px;height:49px;line-height:52px;">打印纸</div>
<div class="c ctr" style="left:469px;top:542px;width:141px;height:49px;line-height:52px;"><span class="d">70</span><span class="a">g</span><span class="d">8</span>包<span class="d"><span class="sl">/</span></span>箱</div>
<div class="c ctr" style="left:611px;top:542px;width:141px;height:49px;line-height:52px;"><span class="a">PAP-</span><span class="d">2002</span></div>
<div class="c ctr" style="left:753px;top:542px;width:141px;height:49px;line-height:52px;"><span class="d">2026<span class="sl">/</span>3<span class="sl">/</span>13</span></div>
<div class="c ctr" style="left:895px;top:542px;width:141px;height:49px;line-height:52px;">线上电商</div>
<div class="c ctr" style="left:1037px;top:542px;width:141px;height:49px;line-height:52px;"><span class="d">199</span></div>
<div class="c ctr" style="left:1179px;top:542px;width:141px;height:49px;line-height:52px;"><span class="d">398</span></div>
<div class="c ctr" style="left:1321px;top:542px;width:141px;height:49px;line-height:52px;">采购<span class="d">2</span>箱</div>
<div class="c ctr" style="left:43px;top:592px;width:141px;height:49px;line-height:52px;"><span class="d">3</span></div>
<div class="c ctr" style="left:185px;top:592px;width:141px;height:49px;line-height:52px;">家具用品</div>
<div class="c ctr" style="left:327px;top:592px;width:141px;height:49px;line-height:52px;">办公椅</div>
<div class="c ctr" style="left:469px;top:592px;width:141px;height:49px;line-height:52px;">网布可升降</div>
<div class="c ctr" style="left:611px;top:592px;width:141px;height:49px;line-height:52px;"><span class="a">CHA-</span><span class="d">2603</span></div>
<div class="c ctr" style="left:753px;top:592px;width:141px;height:49px;line-height:52px;"><span class="d">2026<span class="sl">/</span>3<span class="sl">/</span>20</span></div>
<div class="c ctr" style="left:895px;top:592px;width:141px;height:49px;line-height:52px;">线下家具城</div>
<div class="c ctr" style="left:1037px;top:592px;width:141px;height:49px;line-height:52px;"><span class="d">599</span></div>
<div class="c ctr" style="left:1179px;top:592px;width:141px;height:49px;line-height:52px;"><span class="d">5990</span></div>
<div class="c ctr" style="left:1321px;top:592px;width:141px;height:49px;line-height:52px;">采购<span class="d">10</span>把</div>
<div class="c ctr" style="left:43px;top:642px;width:141px;height:49px;line-height:52px;"><span class="d">4</span></div>
<div class="c ctr" style="left:185px;top:642px;width:141px;height:49px;line-height:52px;">数码配件</div>
<div class="c ctr" style="left:327px;top:642px;width:141px;height:49px;line-height:52px;">无线鼠标</div>
<div class="c ctr" style="left:469px;top:642px;width:141px;height:49px;line-height:52px;">静音蓝牙款</div>
<div class="c ctr" style="left:611px;top:642px;width:141px;height:49px;line-height:52px;"><span class="a">MOU-</span><span class="d">6004</span></div>
<div class="c ctr" style="left:753px;top:642px;width:141px;height:49px;line-height:52px;"><span class="d">2026<span class="sl">/</span>3<span class="sl">/</span>13</span></div>
<div class="c ctr" style="left:895px;top:642px;width:141px;height:49px;line-height:52px;">线上旗舰店</div>
<div class="c ctr" style="left:1037px;top:642px;width:141px;height:49px;line-height:52px;"><span class="d">79</span></div>
<div class="c ctr" style="left:1179px;top:642px;width:141px;height:49px;line-height:52px;"><span class="d">1580</span></div>
<div class="c ctr" style="left:1321px;top:642px;width:141px;height:49px;line-height:52px;">采购<span class="d">20</span>个</div>
<div class="c ctr" style="left:43px;top:692px;width:141px;height:49px;line-height:52px;"><span class="d">5</span></div>
<div class="c ctr" style="left:185px;top:692px;width:141px;height:49px;line-height:52px;">办公耗材</div>
<div class="c ctr" style="left:327px;top:692px;width:141px;height:49px;line-height:52px;">中性笔</div>
<div class="c ctr" style="left:469px;top:692px;width:141px;height:49px;line-height:52px;">黑色<span class="d">0.5</span><span class="a">mm</span></div>
<div class="c ctr" style="left:611px;top:692px;width:141px;height:49px;line-height:52px;"><span class="a">PEN-</span><span class="d">2085</span></div>
<div class="c ctr" style="left:753px;top:692px;width:141px;height:49px;line-height:52px;"><span class="d">2026<span class="sl">/</span>3<span class="sl">/</span>13</span></div>
<div class="c ctr" style="left:895px;top:692px;width:141px;height:49px;line-height:52px;">线下文具店</div>
<div class="c ctr" style="left:1037px;top:692px;width:141px;height:49px;line-height:52px;"><span class="d">2</span></div>
<div class="c ctr" style="left:1179px;top:692px;width:141px;height:49px;line-height:52px;"><span class="d">400</span></div>
<div class="c ctr" style="left:1321px;top:692px;width:141px;height:49px;line-height:52px;">采购<span class="d">200</span>支</div>
<div class="c ctr" style="left:43px;top:742px;width:141px;height:49px;line-height:52px;"><span class="d">6</span></div>
<div class="c ctr" style="left:185px;top:742px;width:141px;height:49px;line-height:52px;">办公设备</div>
<div class="c ctr" style="left:327px;top:742px;width:141px;height:49px;line-height:52px;">碎纸机</div>
<div class="c ctr" style="left:469px;top:742px;width:141px;height:49px;line-height:52px;">单次<span class="d">10</span>张</div>
<div class="c ctr" style="left:611px;top:742px;width:141px;height:49px;line-height:52px;"><span class="a">SHRED-</span><span class="d">2026</span></div>
<div class="c ctr" style="left:753px;top:742px;width:141px;height:49px;line-height:52px;"><span class="d">2026<span class="sl">/</span>3<span class="sl">/</span>18</span></div>
<div class="c ctr" style="left:895px;top:742px;width:141px;height:49px;line-height:52px;">线下供应商</div>
<div class="c ctr" style="left:1037px;top:742px;width:141px;height:49px;line-height:52px;"><span class="d">599</span></div>
<div class="c ctr" style="left:1179px;top:742px;width:141px;height:49px;line-height:52px;"><span class="d">599</span></div>
<div class="c ctr" style="left:1321px;top:742px;width:141px;height:49px;line-height:52px;">行政办公室使用</div>
<div class="c ctr" style="left:43px;top:792px;width:141px;height:49px;line-height:52px;"><span class="d">7</span></div>
<div class="c ctr" style="left:185px;top:792px;width:141px;height:49px;line-height:52px;">家具用品</div>
<div class="c ctr" style="left:327px;top:792px;width:141px;height:49px;line-height:52px;">文件柜</div>
<div class="c ctr" style="left:469px;top:792px;width:141px;height:49px;line-height:52px;">钢制带锁</div>
<div class="c ctr" style="left:611px;top:792px;width:141px;height:49px;line-height:52px;"><span class="a">CAB-</span><span class="d">2607</span></div>
<div class="c ctr" style="left:753px;top:792px;width:141px;height:49px;line-height:52px;"><span class="d">2026<span class="sl">/</span>3<span class="sl">/</span>20</span></div>
<div class="c ctr" style="left:895px;top:792px;width:141px;height:49px;line-height:52px;">线下家具城</div>
<div class="c ctr" style="left:1037px;top:792px;width:141px;height:49px;line-height:52px;"><span class="d">899</span></div>
<div class="c ctr" style="left:1179px;top:792px;width:141px;height:49px;line-height:52px;"><span class="d">1798</span></div>
<div class="c ctr" style="left:1321px;top:792px;width:141px;height:49px;line-height:52px;">采购<span class="d">2</span>个</div>
<div class="hl" style="left:43px;top:191px;width:426px"></div>
<div class="hl" style="left:610px;top:191px;width:569px"></div>
<div class="hl" style="left:43px;top:241px;width:426px"></div>
<div class="hl" style="left:610px;top:241px;width:569px"></div>
<div class="hl" style="left:43px;top:291px;width:426px"></div>
<div class="hl" style="left:610px;top:291px;width:569px"></div>
<div class="hl" style="left:43px;top:341px;width:426px"></div>
<div class="hl" style="left:610px;top:341px;width:569px"></div>
<div class="vl" style="left:184px;top:141px;height:201px"></div>
<div class="vl" style="left:468px;top:141px;height:201px"></div>
<div class="vl" style="left:610px;top:141px;height:201px"></div>
<div class="vl" style="left:752px;top:141px;height:201px"></div>
<div class="vl" style="left:1178px;top:141px;height:201px"></div>
<div class="hl" style="left:43px;top:441px;width:1420px"></div>
<div class="hl" style="left:43px;top:491px;width:1420px"></div>
<div class="hl" style="left:43px;top:541px;width:1420px"></div>
<div class="hl" style="left:43px;top:591px;width:1420px"></div>
<div class="hl" style="left:43px;top:641px;width:1420px"></div>
<div class="hl" style="left:43px;top:691px;width:1420px"></div>
<div class="hl" style="left:43px;top:741px;width:1420px"></div>
<div class="hl" style="left:43px;top:791px;width:1420px"></div>
<div class="hl" style="left:43px;top:841px;width:1420px"></div>
<div class="vl" style="left:184px;top:441px;height:402px"></div>
<div class="vl" style="left:326px;top:441px;height:402px"></div>
<div class="vl" style="left:468px;top:441px;height:402px"></div>
<div class="vl" style="left:610px;top:441px;height:402px"></div>
<div class="vl" style="left:752px;top:441px;height:402px"></div>
<div class="vl" style="left:894px;top:441px;height:402px"></div>
<div class="vl" style="left:1036px;top:441px;height:402px"></div>
<div class="vl" style="left:1178px;top:441px;height:402px"></div>
<div class="vl" style="left:1320px;top:441px;height:402px"></div>
<div class="vl" style="left:1462px;top:441px;height:402px"></div>
<div class="abs" style="left:43px;top:141px;width:1637px;height:1px;background:repeating-linear-gradient(90deg,#222 0 1px,#fff 1px 2px)"></div>
<div class="abs" style="left:41px;top:24px;width:1639px;height:3px;background:#13925f"></div>
<div class="abs" style="left:41px;top:24px;width:2px;height:69px;background:#13925f"></div>
<div class="abs" style="left:41px;top:90px;width:1639px;height:3px;background:#13925f"></div>
<div class="abs" style="left:50px;top:91px;width:1630px;height:1px;background:repeating-linear-gradient(90deg,#e58aa0 0 1px,#5fb090 1px 2px)"></div>
<div class="abs" style="left:43px;top:89px;width:7px;height:6px;background:#fff"></div>
<div class="abs" style="left:44px;top:89px;width:5px;height:5px;background:#13925f"></div>
<div class="abs" style="left:0;top:843px;width:588px;height:4px;background:#ebe6e3;border-right:1px solid #e0dcda"></div>
<div class="abs" style="left:667px;top:843px;width:1013px;height:4px;background:#ebe6e3;border-left:1px solid #e0dcda"></div>
</div>
<div class="abs" style="left:31px;top:326px;width:176px;height:31px;background:#fff;border:1px solid #b9b9b9;box-shadow:2px 2px 3px rgba(0,0,0,.35)"></div>
<div class="abs" style="left:40px;top:332px;height:21px;line-height:21px;font-size:15.2px;letter-spacing:.15px;color:#6a6a6a;white-space:nowrap">行高: 30.00 (1.06 厘米)</div>
<div class="abs" style="left:2px;top:317px;width:207px;height:50px;border:4px solid #f5231c;border-radius:5px"></div>
</body></html>
